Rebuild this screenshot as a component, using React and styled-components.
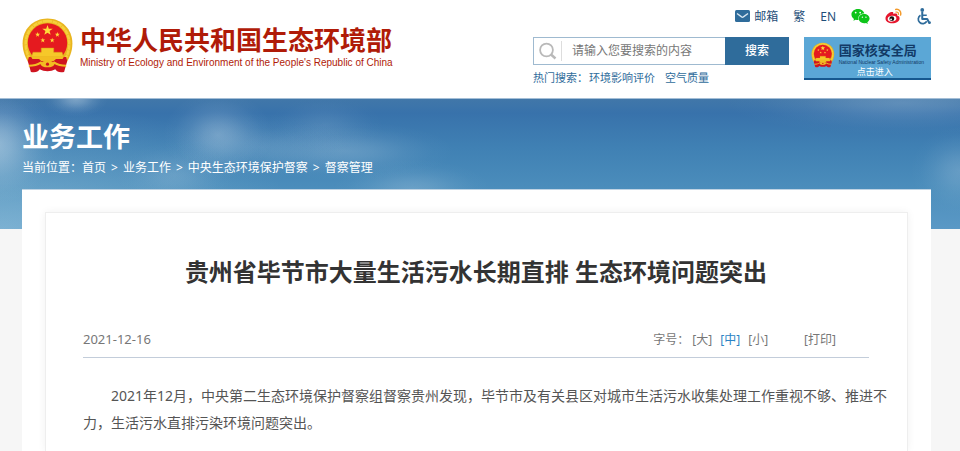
import styled, { createGlobalStyle } from "styled-components";
import { FaWeixin } from "react-icons/fa";

const crumbs = ["首页", "业务工作", "中央生态环境保护督察", "督察管理"];
const hotWords = ["环境影响评价", "空气质量"];
const sizes = ["大", "中", "小"];

const STAR =
  "M0 -5 L1.2 -1.6 L4.8 -1.5 L1.9 0.6 L2.9 4 L0 2 L-2.9 4 L-1.9 0.6 L-4.8 -1.5 L-1.2 -1.6Z";

// soft patch of cloud, fading out in a few steps so it has no visible rim
const cloud = (w, h, x, y, alpha) =>
  `radial-gradient(ellipse ${w}px ${h}px at ${x} ${y}px,
    rgba(215, 230, 240, ${alpha}),
    rgba(215, 230, 240, ${alpha * 0.75}) 25%,
    rgba(215, 230, 240, ${alpha * 0.32}) 55%,
    rgba(215, 230, 240, ${alpha * 0.08}) 80%,
    rgba(215, 230, 240, 0))`;

function Emblem({ size }) {
  return (
    <svg width={size} height={size} viewBox="0 0 100 106" aria-hidden="true">
      <path
        d="M50 1C22 1 2 22 2 49c0 16 6 30 14 40l68 0c8-10 14-24 14-40C98 22 78 1 50 1Z"
        fill="#e9b51f"
      />
      <path
        d="M50 6C26 6 8 25 8 49c0 15 5 28 12 36M50 6c24 0 42 19 42 43 0 15-5 28-12 36"
        fill="none"
        stroke="#f6d03c"
        strokeWidth="5"
        strokeDasharray="9 1"
      />
      <circle cx="50" cy="48" r="38" fill="#e51a1f" />
      <path d={STAR} transform="translate(50 24) scale(2.1)" fill="#ffdb3a" />
      <path d={STAR} transform="translate(31 32) scale(1)" fill="#ffdb3a" />
      <path d={STAR} transform="translate(69 32) scale(1)" fill="#ffdb3a" />
      <path d={STAR} transform="translate(41 43) scale(1)" fill="#ffdb3a" />
      <path d={STAR} transform="translate(59 43) scale(1)" fill="#ffdb3a" />
      <path
        d="M38 58h24v8h16l3 9H19l3-9h16Z"
        fill="#f6c829"
        stroke="#d9a01a"
        strokeWidth="1"
      />
      <path
        d="M14 75h20c4 8 28 8 32 0h20l2 8-6 21c-8 2-14 0-17-5-8 5-22 5-30 0-3 5-9 7-17 5l-6-21Z"
        fill="#cf1420"
      />
      <path d="M18 74h64l-3 5H66c-4 8-28 8-32 0H21Z" fill="#f2bd22" />
      <path
        d="M14 92c10 0 17-2 23-6 6 5 20 5 26 0 6 4 13 6 23 6"
        fill="none"
        stroke="#f2bd22"
        strokeWidth="4"
      />
      <ellipse cx="50" cy="89" rx="13" ry="6" fill="#f2bd22" />
      <circle cx="50" cy="89" r="3" fill="#cf1420" />
    </svg>
  );
}

function MailIcon() {
  return (
    <svg width="15" height="12" viewBox="0 0 15 12" aria-hidden="true">
      <rect width="15" height="12" rx="1.5" fill="#2f6c9b" />
      <path
        d="M2 3.5 6.6 6.9Q7.5 7.5 8.4 6.9L13 3.5"
        fill="none"
        stroke="#d6e5f0"
        strokeWidth="1.4"
      />
    </svg>
  );
}

function WeiboIcon() {
  return (
    <svg width="17" height="16" viewBox="0 0 35 32" aria-hidden="true">
      <path
        d="M13 8c3-1 5 0 4 4 5-2 9-1 8 3 4 1 5 3 5 6 0 6-7 10-15 10S1 27 1 21C1 15 8 9 13 8Z"
        fill="#e6162d"
      />
      <ellipse
        cx="14.5"
        cy="21.5"
        rx="9"
        ry="6"
        transform="rotate(-8 14.5 21.5)"
        fill="#fff"
      />
      <circle cx="14" cy="21.5" r="5" fill="#1a1010" />
      <circle cx="12.5" cy="23" r="1.8" fill="#fff" />
      <g fill="none" stroke="#f39a2b" strokeLinecap="round">
        <path d="M22 2.5C29 1 34 7 32 14" strokeWidth="3" />
        <path d="M22.5 8C26 7 28.5 9.5 27.5 13" strokeWidth="2.4" />
      </g>
    </svg>
  );
}

function WheelchairIcon() {
  return (
    <svg
      width="14"
      height="17"
      viewBox="0 0 28 34"
      fill="none"
      stroke="#2f6c9b"
      strokeWidth="4"
      aria-hidden="true"
    >
      <circle cx="10.5" cy="4" r="3.8" fill="#2f6c9b" stroke="none" />
      <path d="M10.5 8v14h10l4 8 3-1.5" strokeLinejoin="round" />
      <path d="M11 14.5h8.5" strokeWidth="3" />
      <path d="M7 14.5A9 9 0 1 0 19.5 26.5" strokeWidth="3.4" />
    </svg>
  );
}

function SearchIcon() {
  return (
    <svg width="18" height="18" viewBox="0 0 18 18" aria-hidden="true">
      <circle
        cx="7.5"
        cy="8"
        r="6.4"
        fill="none"
        stroke="#b9b9b9"
        strokeWidth="1.8"
      />
      <path d="M12 12.5l4.5 4" stroke="#b9b9b9" strokeWidth="2.4" />
    </svg>
  );
}

export default function App() {
  return (
    <>
      <GlobalStyle />
      <Header>
        <Brand href="#">
          <Emblem size={55} />
          <BrandText>
            <BrandName>中华人民共和国生态环境部</BrandName>
            <BrandSub>
              Ministry of Ecology and Environment of the People's Republic of
              China
            </BrandSub>
          </BrandText>
        </Brand>
        <Tools>
          <QuickLinks>
            <QuickLink href="#">
              <MailIcon />
              邮箱
            </QuickLink>
            <QuickLink href="#">繁</QuickLink>
            <QuickLink href="#">EN</QuickLink>
            <QuickLink href="#" $color="#0dc41a" aria-label="微信">
              <FaWeixin size={19} />
            </QuickLink>
            <QuickLink href="#" aria-label="微博">
              <WeiboIcon />
            </QuickLink>
            <QuickLink href="#" aria-label="无障碍">
              <WheelchairIcon />
            </QuickLink>
          </QuickLinks>
          <ToolRow>
            <div>
              <SearchForm onSubmit={(e) => e.preventDefault()}>
                <SearchLabel htmlFor="keyword" aria-label="搜索">
                  <SearchIcon />
                </SearchLabel>
                <SearchInput id="keyword" placeholder="请输入您要搜索的内容" />
                <SearchButton type="submit">搜索</SearchButton>
              </SearchForm>
              <HotSearch>
                <span>热门搜索：</span>
                {hotWords.map((word) => (
                  <a href="#" key={word}>
                    {word}
                  </a>
                ))}
              </HotSearch>
            </div>
            <Bureau href="#">
              <Emblem size={26} />
              <BureauText>
                <BureauName>国家核安全局</BureauName>
                <BureauSub>National Nuclear Safety Administration</BureauSub>
                <BureauEnter>点击进入</BureauEnter>
              </BureauText>
            </Bureau>
          </ToolRow>
        </Tools>
      </Header>
      <Sky>
        <SectionTitle>业务工作</SectionTitle>
        <Breadcrumb>
          <span>当前位置：</span>
          {crumbs.map((crumb, index) => (
            <span key={crumb}>
              {index > 0 && <Divider>&gt;</Divider>}
              <a href="#">{crumb}</a>
            </span>
          ))}
        </Breadcrumb>
      </Sky>
      <Panel>
        <Article>
          <Title>贵州省毕节市大量生活污水长期直排 生态环境问题突出</Title>
          <Meta>
            <time>2021-12-16</time>
            <MetaTools>
              <span>字号：</span>
              {sizes.map((size) => (
                <TextButton type="button" key={size} $active={size === "中"}>
                  [{size}]
                </TextButton>
              ))}
              <PrintButton type="button">[打印]</PrintButton>
            </MetaTools>
          </Meta>
          <Body>
            2021年12月，中央第二生态环境保护督察组督察贵州发现，毕节市及有关县区对城市生活污水收集处理工作重视不够、推进不力，生活污水直排污染环境问题突出。
          </Body>
        </Article>
      </Panel>
    </>
  );
}

const GlobalStyle = createGlobalStyle`
  * {
    box-sizing: border-box;
  }

  body {
    margin: 0;
    background: #f6f6f6;
    font-family: "Noto Sans", "Noto Sans CJK SC", sans-serif;
    font-size: 12px;
  }

  a {
    color: inherit;
    text-decoration: none;
  }

  button,
  input {
    font-family: inherit;
    font-size: 12px;
  }
`;

const Header = styled.header`
  display: flex;
  justify-content: space-between;
  height: 98px;
  padding: 0 29px 0 20px;
  background: #fff;
`;

const Brand = styled.a`
  display: flex;
  align-items: flex-start;
  gap: 5px;
  padding-top: 18px;
`;

const BrandText = styled.div`
  padding-top: 5px;
  color: #b01b08;
  white-space: nowrap;
`;

const BrandName = styled.div`
  font-size: 26px;
  font-weight: 700;
  line-height: 34px;
`;

const BrandSub = styled.div`
  font-family: "Liberation Sans", sans-serif;
  font-size: 10px;
  line-height: 12px;
`;

const Tools = styled.div`
  padding-top: 6px;
`;

const QuickLinks = styled.nav`
  display: flex;
  justify-content: flex-end;
  align-items: center;
  gap: 15px;
  height: 20px;
`;

const QuickLink = styled.a`
  display: flex;
  align-items: center;
  gap: 4px;
  color: ${(props) => props.$color || "#1f4e78"};
`;

const ToolRow = styled.div`
  display: flex;
  gap: 15px;
  margin-top: 11px;
`;

const SearchForm = styled.form`
  display: flex;
  width: 256px;
  height: 28px;
  border: 1px solid #9fbad0;
`;

const SearchLabel = styled.label`
  display: flex;
  align-items: center;
  justify-content: center;
  width: 28px;
  margin: 3px 0;
  border-right: 1px solid #ddd;
`;

const SearchInput = styled.input`
  flex: 1;
  min-width: 0;
  padding: 0 0 2px 10px;
  border: none;
  outline: none;
  background: none;

  &::placeholder {
    color: #777;
  }
`;

const SearchButton = styled.button`
  width: 64px;
  margin: -1px;
  padding: 0 0 2px;
  border: none;
  background: #2f6c9b;
  color: #fff;
  font-weight: 500;
  cursor: pointer;
`;

const HotSearch = styled.div`
  display: flex;
  gap: 10px;
  margin-top: 5px;
  color: #2f6c9b;
  font-size: 11px;
  line-height: 16px;

  & span {
    margin-right: -9px;
  }
`;

const Bureau = styled.a`
  display: flex;
  gap: 4px;
  width: 127px;
  height: 43px;
  padding: 5px 7px 0;
  border-bottom: 2px solid #16588f;
  background: #5ba7d6;
`;

const BureauText = styled.div`
  flex: 1;
  white-space: nowrap;
`;

const BureauName = styled.div`
  color: #123a66;
  font-size: 13px;
  font-weight: 700;
  line-height: 17px;
`;

const BureauSub = styled.div`
  color: #123a66;
  font-family: "Liberation Sans", sans-serif;
  font-size: 5px;
  line-height: 6px;
`;

const BureauEnter = styled.div`
  padding-left: 18px;
  color: #fff;
  font-size: 9px;
  line-height: 13px;
`;

const Sky = styled.section`
  height: 131px;
  padding: 20px 22px;
  border-top: 1px solid #a4bed6;
  color: #fff;
  background:
    ${cloud(32, 18, "76px", 0, 0.4)},
    ${cloud(60, 60, "-4px", 45, 0.5)},
    ${cloud(55, 44, "218px", 36, 0.34)},
    ${cloud(90, 34, "262px", 48, 0.14)},
    ${cloud(110, 30, "345px", 52, 0.24)},
    ${cloud(60, 30, "325px", 26, 0.12)},
    ${cloud(60, 34, "175px", 76, 0.16)},
    ${cloud(80, 30, "412px", 90, 0.22)},
    ${cloud(50, 45, "100%", 72, 0.22)},
    ${cloud(180, 32, "94%", 4, 0.22)},
    radial-gradient(ellipse 300px 130px at 0 100%, rgba(190, 225, 235, 0.34), transparent),
    linear-gradient(180deg, #4177a9 0, #3872ab 14px, #4081b4 50px, #4c8ebc 92px, #5b99c6 131px);
`;

const SectionTitle = styled.h2`
  margin: 0;
  font-size: 27px;
  font-weight: 700;
  line-height: 36px;
`;

const Breadcrumb = styled.nav`
  display: flex;
  line-height: 25px;
  white-space: nowrap;
`;

const Divider = styled.span`
  margin: 0 5px;
`;

const Panel = styled.main`
  position: relative;
  margin: -40px 29px 0 22px;
  padding: 22px 23px 0;
  border-top: 1px solid #c0d3e3;
  background: #fff;
`;

const Article = styled.article`
  padding: 41px 18px 15px 37px;
  border: 1px solid #eee;
  border-bottom: none;
  box-shadow: 0 0 8px rgba(0, 0, 0, 0.06);
`;

const Title = styled.h1`
  margin: 0 20px 0 0;
  color: #333;
  font-size: 24px;
  font-weight: 700;
  line-height: 36px;
  text-align: center;
`;

const Meta = styled.div`
  display: flex;
  justify-content: space-between;
  align-items: center;
  height: 38px;
  margin: 30px 20px 0 0;
  padding-right: 33px;
  border-bottom: 1px solid #c3cdda;
  color: #777;
  font-size: 13px;
`;

const MetaTools = styled.div`
  display: flex;
  align-items: center;
  gap: 8px;
  font-size: 12px;

  & span {
    margin-right: -5px;
  }
`;

const TextButton = styled.button`
  padding: 0;
  border: none;
  background: none;
  color: ${(props) => (props.$active ? "#2a83c4" : "#777")};
  cursor: pointer;
`;

const PrintButton = styled(TextButton)`
  margin-left: 28px;
`;

const Body = styled.p`
  margin: 24px 0 0;
  color: #555;
  font-size: 14px;
  line-height: 27px;
  text-indent: 2em;
`;
